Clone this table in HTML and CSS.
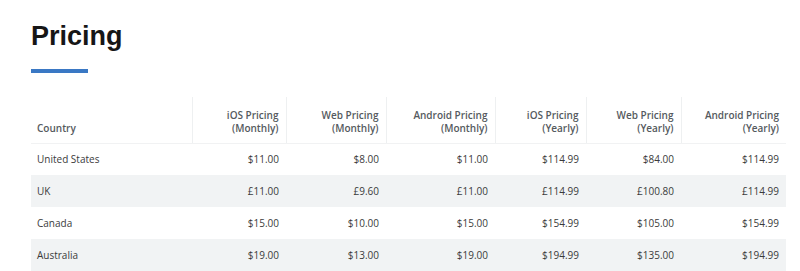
FILE: index.html
```html
<!DOCTYPE html>
<html lang="en">
<head>
    <meta charset="UTF-8">
    <meta name="viewport" content="width=device-width, initial-scale=1.0">
    <title>Pricing</title>
    <link rel="stylesheet" href="styles.css">
</head>
<body>
    <div class="pricing">
        <h1 class="pricing-title">Pricing</h1>
        <div class="title-bar"></div>

        <table class="price-table">
            <thead>
                <tr>
                    <th class="col-country">Country</th>
                    <th class="col-ios-m">iOS Pricing<br>(Monthly)</th>
                    <th class="col-web-m">Web Pricing<br>(Monthly)</th>
                    <th class="col-and-m">Android Pricing<br>(Monthly)</th>
                    <th class="col-ios-y">iOS Pricing<br>(Yearly)</th>
                    <th class="col-web-y">Web Pricing<br>(Yearly)</th>
                    <th class="col-and-y">Android Pricing<br>(Yearly)</th>
                </tr>
            </thead>
            <tbody>
                <tr>
                    <td>United States</td>
                    <td>$11.00</td>
                    <td>$8.00</td>
                    <td>$11.00</td>
                    <td>$114.99</td>
                    <td>$84.00</td>
                    <td>$114.99</td>
                </tr>
                <tr>
                    <td>UK</td>
                    <td>£11.00</td>
                    <td>£9.60</td>
                    <td>£11.00</td>
                    <td>£114.99</td>
                    <td>£100.80</td>
                    <td>£114.99</td>
                </tr>
                <tr>
                    <td>Canada</td>
                    <td>$15.00</td>
                    <td>$10.00</td>
                    <td>$15.00</td>
                    <td>$154.99</td>
                    <td>$105.00</td>
                    <td>$154.99</td>
                </tr>
                <tr>
                    <td>Australia</td>
                    <td>$19.00</td>
                    <td>$13.00</td>
                    <td>$19.00</td>
                    <td>$194.99</td>
                    <td>$135.00</td>
                    <td>$194.99</td>
                </tr>
            </tbody>
        </table>
    </div>
</body>
</html>
```

FILE: styles.css
```css
body {
    margin: 0;
    background-color: #ffffff;
    font-family: "Open Sans", "Noto Sans", sans-serif;
    color: #333333;
}

.pricing {
    padding: 21px 14px 0 31px;
}

.pricing-title {
    font-family: "Liberation Sans", Arial, sans-serif;
    font-size: 27px;
    font-weight: bold;
    color: #161616;
    margin: 0;
    line-height: 31px;
}

.title-bar {
    width: 57px;
    height: 4px;
    background-color: #3a78c4;
    margin-top: 17px;
}

.price-table {
    width: 755px;
    margin-top: 24px;
    border-collapse: collapse;
    font-size: 10px;
}

.price-table th {
    height: 46px;
    padding: 0 7px 8px 6px;
    vertical-align: bottom;
    text-align: right;
    font-weight: 600;
    color: #555a5e;
    line-height: 13px;
    border-left: 1px solid #eef0f1;
    border-bottom: 1px solid #f1f2f3;
    box-sizing: border-box;
}

.price-table th.col-country {
    text-align: left;
    border-left: none;
}

.col-country { width: 161px; }
.col-ios-m { width: 94px; }
.col-web-m { width: 100px; }
.col-and-m { width: 109px; }
.col-ios-y { width: 91px; }
.col-web-y { width: 95px; }
.col-and-y { width: 105px; }

.price-table td {
    height: 32px;
    padding: 0 7px 0 6px;
    text-align: right;
    vertical-align: middle;
    color: #3b3b3b;
    box-sizing: border-box;
}

.price-table td:first-child {
    text-align: left;
}

.price-table tbody tr:nth-child(even) {
    background-color: #f1f3f4;
}
```
